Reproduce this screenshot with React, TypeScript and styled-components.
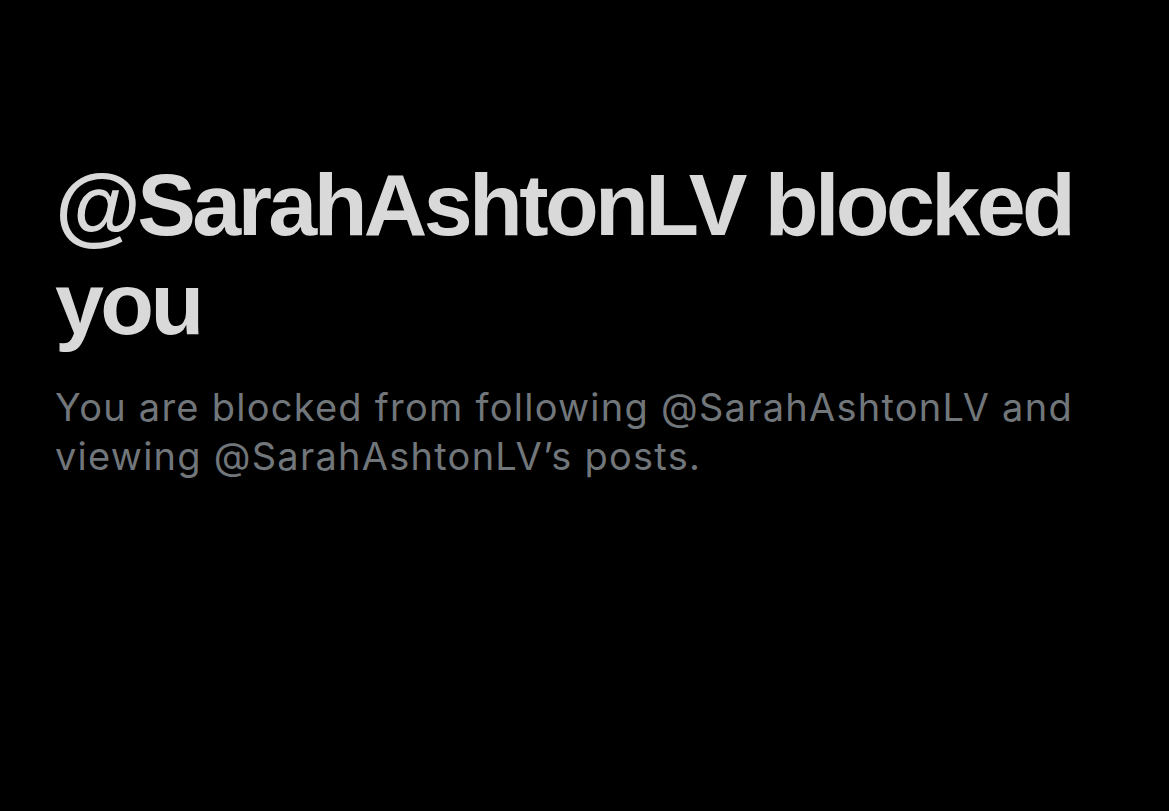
import React from "react";
import styled, { createGlobalStyle } from "styled-components";

const Global = createGlobalStyle`
  html, body { margin: 0; padding: 0; background: #000; }
  body { width: 1169px; height: 811px; overflow: hidden; }
`;

const Page = styled.main`
  width: 1169px;
  height: 811px;
  background: #000;
  box-sizing: border-box;
  padding: 155px 60px 0 55px;
  display: flex;
  flex-direction: column;
`;

const Title = styled.h1`
  margin: 0;
  font-family: "Liberation Sans", Arial, sans-serif;
  font-weight: 700;
  font-size: 88px;
  line-height: 99px;
  color: #d9d9d9;
  letter-spacing: -3.6px;
`;

const Subtitle = styled.p`
  margin: 30px 0 0;
  font-family: Inter, "Noto Sans", sans-serif;
  font-weight: 400;
  font-size: 38px;
  line-height: 49px;
  color: #71767b;
  letter-spacing: 1.25px;
`;

export default function App() {
  return (
    <>
      <Global />
      <Page>
        <Title>@SarahAshtonLV blocked you</Title>
        <Subtitle>
          You are blocked from following @SarahAshtonLV and viewing
          @SarahAshtonLV’s posts.
        </Subtitle>
      </Page>
    </>
  );
}
